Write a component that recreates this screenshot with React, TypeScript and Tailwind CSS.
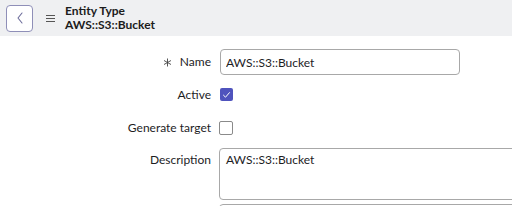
import React from 'react';

const App: React.FC = () => {
  return (
    <div className="w-[512px] h-[206px] overflow-hidden bg-white text-[#1d1d1f]" style={{ fontFamily: 'Lato, "Open Sans", sans-serif' }}>
      {/* Header */}
      <header className="h-[36px] bg-[#eff0f2] flex items-center pl-[6px] gap-[10px]">
        <button className="w-[27px] h-[27px] shrink-0 rounded-[4px] border border-[#8f8fb8] bg-white flex items-center justify-center">
          <svg width="10" height="14" viewBox="0 0 10 14" fill="none">
            <path d="M7 2L3 7l4 5" stroke="#6b6b9a" strokeWidth="1.1" strokeLinecap="round" strokeLinejoin="round" />
          </svg>
        </button>
        <svg width="11" height="9" viewBox="0 0 11 9" className="ml-[2px] shrink-0">
          <path d="M1 1.5h9M1 4.5h9M1 7.5h9" stroke="#555" strokeWidth="1" />
        </svg>
        <div className="-ml-[1px] leading-[14px] font-bold text-[12px] text-[#1b1b1b]">
          <div>Entity Type</div>
          <div>AWS::S3::Bucket</div>
        </div>
      </header>

      {/* Form */}
      <div className="pt-[13px] flex flex-col text-[12px]">
        <div className="flex items-center h-[26px]">
          <div className="w-[211px] shrink-0 flex justify-end items-center gap-[8px]">
            <svg width="9" height="9" viewBox="0 0 9 9" fill="none">
              <path d="M4.5 0.5v8M1 2.5l7 4M1 6.5l7-4" stroke="#444" strokeWidth="0.9" />
            </svg>
            <span>Name</span>
          </div>
          <input
            readOnly
            value="AWS::S3::Bucket"
            className="ml-[9px] w-[240px] shrink-0 h-[26px] rounded-[4px] border border-[#a8a8a8] px-[5px] text-[12px] text-[#1d1d1f] outline-none"
            style={{ fontFamily: 'Lato, sans-serif' }}
          />
        </div>

        <div className="flex items-center h-[13px] mt-[13px]">
          <div className="w-[211px] shrink-0 text-right">Active</div>
          <div className="ml-[9px] w-[13px] h-[13px] shrink-0 rounded-[2px] bg-[#4f53bd] flex items-center justify-center">
            <svg width="9" height="8" viewBox="0 0 9 8" fill="none">
              <path d="M1.5 4.2l2 2 4-4.6" stroke="white" strokeWidth="1" strokeLinecap="round" strokeLinejoin="round" />
            </svg>
          </div>
        </div>

        <div className="flex items-center h-[13px] mt-[20px]">
          <div className="w-[211px] shrink-0 text-right">Generate target</div>
          <div className="ml-[8px] w-[14px] h-[14px] shrink-0 rounded-[2px] border border-[#8a8a8a] bg-white" />
        </div>

        <div className="flex items-start mt-[14px]">
          <div className="w-[211px] shrink-0 text-right pt-[3px]">Description</div>
          <div className="ml-[8px] w-[320px] shrink-0 h-[52px] rounded-[4px] border border-[#a8a8a8] px-[6px] pt-[2px]">
            AWS::S3::Bucket
          </div>
        </div>

        <div className="flex mt-[4px]">
          <div className="w-[211px] shrink-0" />
          <div className="ml-[8px] w-[320px] shrink-0 h-[30px] rounded-[4px] border border-[#a8a8a8]" />
        </div>
      </div>
    </div>
  );
};

export default App;
